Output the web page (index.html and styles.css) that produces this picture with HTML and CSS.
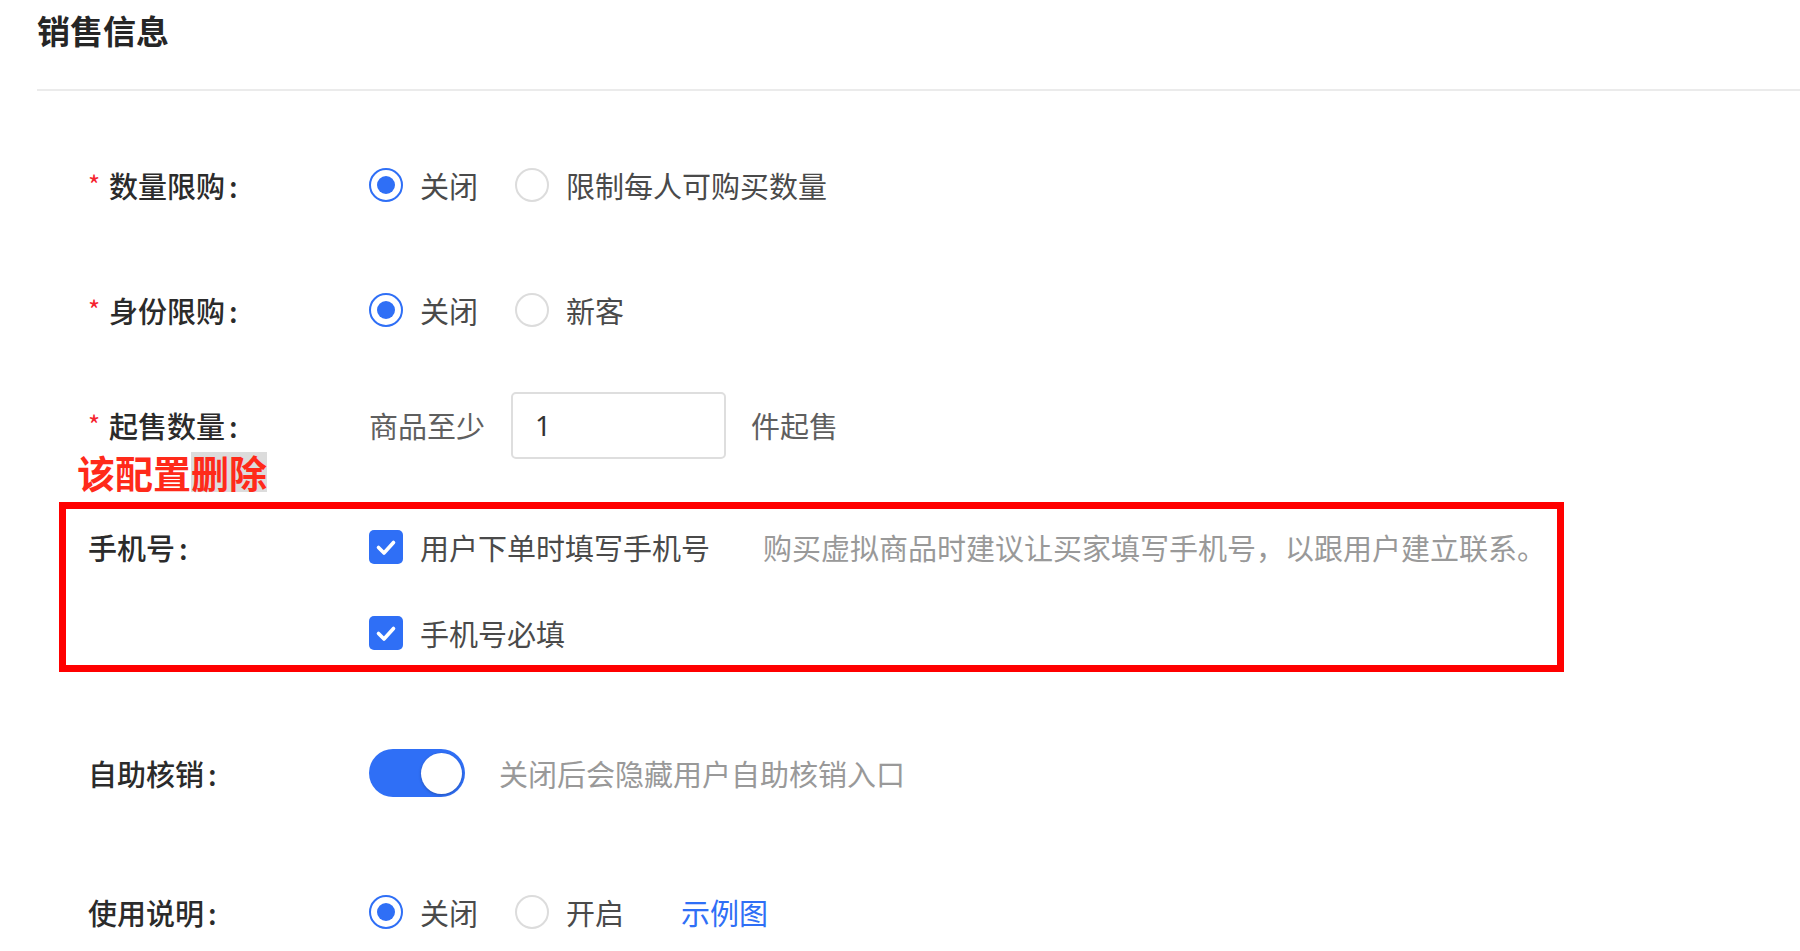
FILE: index.html
```html
<!DOCTYPE html>
<html lang="zh-CN">
<head>
<meta charset="utf-8">
<title>销售信息</title>
<link rel="stylesheet" href="styles.css">
</head>
<body>
<div class="page">
  <header class="section-header">
    <h2 class="section-title">销售信息</h2>
  </header>

  <div class="form">
    <div class="form-item item-quota">
      <div class="form-label"><span class="req">*</span>数量限购<span class="colon">:</span></div>
      <div class="form-control">
        <span class="radio checked"><span class="radio-circle"></span><span class="opt-text">关闭</span></span>
        <span class="radio"><span class="radio-circle"></span><span class="opt-text">限制每人可购买数量</span></span>
      </div>
    </div>

    <div class="form-item item-identity">
      <div class="form-label"><span class="req">*</span>身份限购<span class="colon">:</span></div>
      <div class="form-control">
        <span class="radio checked"><span class="radio-circle"></span><span class="opt-text">关闭</span></span>
        <span class="radio"><span class="radio-circle"></span><span class="opt-text">新客</span></span>
      </div>
    </div>

    <div class="form-item item-min">
      <div class="form-label"><span class="req">*</span>起售数量<span class="colon">:</span></div>
      <div class="form-control">
        <span class="text-muted">商品至少</span>
        <span class="input-box">1</span>
        <span class="text-muted">件起售</span>
      </div>
    </div>

    <div class="annotation">该配置<span class="mark">删除</span></div>

    <div class="highlight-box">
      <div class="form-item item-phone">
        <div class="form-label">手机号<span class="colon">:</span></div>
        <div class="form-control">
          <span class="checkbox">
            <span class="check-square"><svg viewBox="0 0 34 34" width="34" height="34"><path d="M9.5 17.5 L15 23 L24.5 12.5" fill="none" stroke="#fff" stroke-width="3.6" stroke-linecap="round" stroke-linejoin="round"/></svg></span>
            <span class="opt-text">用户下单时填写手机号</span>
          </span>
          <span class="hint hint-phone">购买虚拟商品时建议让买家填写手机号，以跟用户建立联系。</span>
        </div>
      </div>
      <div class="form-item item-required">
        <div class="form-label"></div>
        <div class="form-control">
          <span class="checkbox">
            <span class="check-square"><svg viewBox="0 0 34 34" width="34" height="34"><path d="M9.5 17.5 L15 23 L24.5 12.5" fill="none" stroke="#fff" stroke-width="3.6" stroke-linecap="round" stroke-linejoin="round"/></svg></span>
            <span class="opt-text">手机号必填</span>
          </span>
        </div>
      </div>
    </div>

    <div class="form-item item-self">
      <div class="form-label">自助核销<span class="colon">:</span></div>
      <div class="form-control">
        <span class="switch on"><span class="switch-knob"></span></span>
        <span class="hint hint-switch">关闭后会隐藏用户自助核销入口</span>
      </div>
    </div>

    <div class="form-item item-usage">
      <div class="form-label">使用说明<span class="colon">:</span></div>
      <div class="form-control">
        <span class="radio checked"><span class="radio-circle"></span><span class="opt-text">关闭</span></span>
        <span class="radio"><span class="radio-circle"></span><span class="opt-text">开启</span></span>
        <a class="link" href="#">示例图</a>
      </div>
    </div>
  </div>
</div>
</body>
</html>
```

FILE: styles.css
```css
* {
  box-sizing: border-box;
}

html, body {
  margin: 0;
  padding: 0;
  background: #ffffff;
}

body {
  font-family: "Noto Sans CJK SC", "Noto Sans", sans-serif;
  color: #333333;
  font-size: 29px;
  line-height: 40px;
}

.page {
  width: 1800px;
  height: 951px;
  overflow: hidden;
}

.section-header {
  margin-left: 37px;
  height: 91px;
  border-bottom: 2px solid #ebebeb;
  padding-top: 10px;
}

.section-title {
  margin: 0;
  font-size: 33px;
  line-height: 40px;
  font-weight: 700;
  color: #262626;
}

.form-item {
  display: flex;
  align-items: center;
  padding-left: 88px;
  height: 68px;
}

.form-label {
  width: 281px;
  flex: none;
  color: #2b2b2b;
  font-weight: 500;
  white-space: nowrap;
}

.colon {
  margin-left: 4px;
}

.req {
  display: inline-block;
  width: 21px;
  color: #f5222d;
  font-size: 26px;
  font-weight: 400;
  vertical-align: top;
  line-height: 38px;
}

.form-control {
  display: flex;
  align-items: center;
  white-space: nowrap;
}

.item-quota { margin-top: 60px; }
.item-identity { margin-top: 57px; }
.item-min { margin-top: 47px; }

.radio {
  display: inline-flex;
  align-items: center;
  margin-right: 37px;
}

.radio-circle {
  width: 34px;
  height: 34px;
  border-radius: 50%;
  border: 2px solid #dcdcdc;
  margin-right: 17px;
  display: flex;
  align-items: center;
  justify-content: center;
  flex: none;
}

.radio.checked .radio-circle {
  border-color: #2f6ff6;
}

.radio.checked .radio-circle::after {
  content: "";
  width: 18px;
  height: 18px;
  border-radius: 50%;
  background: #2f6ff6;
}

.opt-text {
  color: #4a4a4a;
}

.text-muted {
  color: #5f5f5f;
}

.input-box {
  width: 215px;
  height: 67px;
  border: 2px solid #dedede;
  border-radius: 5px;
  margin: 0 25px 0 26px;
  padding-left: 22px;
  display: flex;
  align-items: center;
  color: #333333;
  font-family: "Noto Sans", "Noto Sans CJK SC", sans-serif;
  font-size: 28px;
}

.annotation {
  margin-top: -7px;
  margin-left: 77px;
  height: 40px;
  font-size: 38px;
  line-height: 40px;
  font-weight: 700;
  color: #ff2a1a;
  display: flex;
}

.mark {
  background: #dcdcdc;
}

.highlight-box {
  margin-top: 10px;
  margin-left: 59px;
  width: 1505px;
  border: 7px solid #ff0000;
  padding: 20px 0 14px 0;
}

.highlight-box .form-item {
  padding-left: 22px;
  height: 36px;
}

.highlight-box .item-required {
  margin-top: 50px;
}

.checkbox {
  display: inline-flex;
  align-items: center;
}

.check-square {
  width: 34px;
  height: 34px;
  border-radius: 5px;
  background: #2f6ff6;
  margin-right: 17px;
  display: flex;
  flex: none;
}

.hint {
  color: #999999;
}

.hint-phone {
  margin-left: 53px;
}

.item-self {
  margin-top: 77px;
  height: 48px;
}

.switch {
  width: 96px;
  height: 48px;
  border-radius: 24px;
  background: #2f6ff6;
  display: flex;
  align-items: center;
  justify-content: flex-end;
  padding-right: 3px;
  flex: none;
}

.switch-knob {
  width: 41px;
  height: 41px;
  border-radius: 50%;
  background: #ffffff;
  box-shadow: 0 1px 3px rgba(0, 0, 0, 0.25);
}

.hint-switch {
  margin-left: 34px;
}

.item-usage {
  margin-top: 81px;
}

.link {
  color: #2f6ff6;
  text-decoration: none;
  margin-left: 20px;
}
```
